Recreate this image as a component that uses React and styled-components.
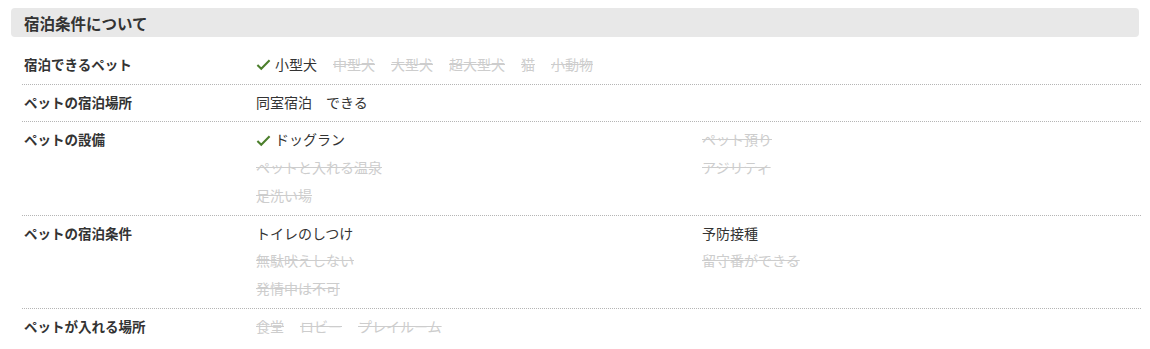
import React from "react";
import styled, { createGlobalStyle } from "styled-components";

const GlobalStyle = createGlobalStyle`
body {
    margin: 0;
    background: #fff;
    font-family: "Noto Sans CJK JP", "Noto Sans", sans-serif;
    color: #333;
}
`;

const rows = [
    {
        label: "宿泊できるペット",
        inline: true,
        items: [
            { text: "小型犬", on: true },
            { text: "中型犬" },
            { text: "大型犬" },
            { text: "超大型犬" },
            { text: "猫" },
            { text: "小動物" },
        ],
    },
    {
        label: "ペットの宿泊場所",
        inline: true,
        items: [{ text: "同室宿泊　できる", plain: true }],
    },
    {
        label: "ペットの設備",
        items: [
            { text: "ドッグラン", on: true },
            { text: "ペット預り" },
            { text: "ペットと入れる温泉" },
            { text: "アジリティ" },
            { text: "足洗い場" },
        ],
    },
    {
        label: "ペットの宿泊条件",
        items: [
            { text: "トイレのしつけ", plain: true },
            { text: "予防接種", plain: true },
            { text: "無駄吠えしない" },
            { text: "留守番ができる" },
            { text: "発情中は不可" },
        ],
    },
    {
        label: "ペットが入れる場所",
        inline: true,
        items: [{ text: "食堂" }, { text: "ロビー" }, { text: "プレイルーム" }],
    },
];

function Check() {
    return (
        <CheckIcon viewBox="0 0 16 16">
            <path d="M1.5 8.6 L5.6 12.6 L14.5 3.4" fill="none" stroke="#4c7f2c" strokeWidth="2.2" />
        </CheckIcon>
    );
}

export default function App() {
    return (
        <Wrapper>
            <GlobalStyle />
            <Title>宿泊条件について</Title>

            <Table>
                {rows.map((row) => (
                    <Row key={row.label}>
                        <Label>{row.label}</Label>
                        <Values $inline={row.inline}>
                            {row.items.map((item) => (
                                <Item key={item.text} $off={!item.on && !item.plain}>
                                    {item.on && <Check />}
                                    <span>{item.text}</span>
                                </Item>
                            ))}
                        </Values>
                    </Row>
                ))}
            </Table>
        </Wrapper>
    );
}

const Wrapper = styled.div`
padding: 8px 9px 0 11px;
`;

const Title = styled.h2`
margin: 0;
height: 29px;
padding: 0 13px;
border-radius: 4px;
background-color: #e8e8e8;
margin-right: 2px;

display: flex;
align-items: center;

font-size: 15.5px;
font-weight: 700;
color: #333;
`;

const Table = styled.div`
margin-top: 10px;
padding-left: 11px;
`;

const Row = styled.div`
display: flex;
padding: 4px 0 5px;
border-bottom: 1px dotted #b5b5b5;

&:last-child{
    border-bottom: none;
}
`;

const Label = styled.div`
width: 234px;
flex-shrink: 0;
padding-left: 2px;
box-sizing: border-box;

font-size: 13.5px;
font-weight: 700;
line-height: 27.7px;
color: #333;
`;

const Values = styled.div`
flex: 1;
display: ${(p) => (p.$inline ? "flex" : "grid")};
grid-template-columns: 446px 1fr;
gap: ${(p) => (p.$inline ? "0 16px" : "0")};
`;

const Item = styled.div`
display: flex;
align-items: center;
line-height: 27.7px;

font-size: 14px;
color: ${(p) => (p.$off ? "#cdcdcd" : "#333")};
text-decoration: ${(p) => (p.$off ? "line-through" : "none")};
`;

const CheckIcon = styled.svg`
width: 15px;
height: 15px;
margin-right: 4px;
`;
